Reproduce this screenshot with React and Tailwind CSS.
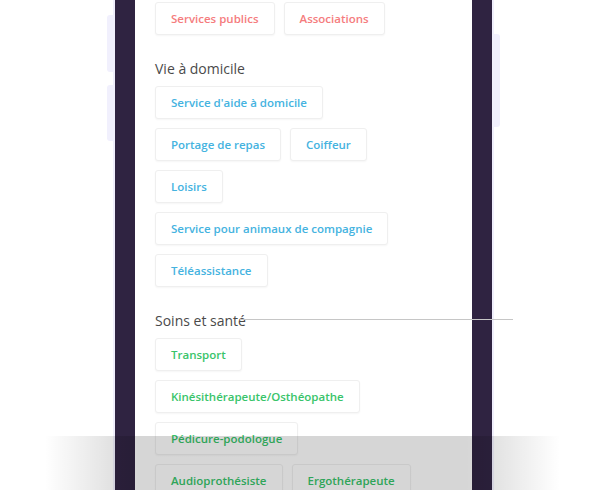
import React from 'react';

const sections = [
  {
    title: null,
    color: 'text-[#f57c7e]',
    rows: [['Services publics', 'Associations']],
  },
  {
    title: 'Vie à domicile',
    color: 'text-[#45b3df]',
    rows: [
      ["Service d'aide à domicile"],
      ['Portage de repas', 'Coiffeur'],
      ['Loisirs'],
      ['Service pour animaux de compagnie'],
      ['Téléassistance'],
    ],
  },
  {
    title: 'Soins et santé',
    color: 'text-[#38c46a]',
    rows: [
      ['Transport'],
      ['Kinésithérapeute/Osthéopathe'],
      ['Pédicure-podologue'],
      ['Audioprothésiste', 'Ergothérapeute'],
    ],
  },
];

function Chip({ label, color }) {
  return (
    <div className={`h-[33px] px-[15px] flex items-center border border-[#efefef] rounded-[3px] bg-white shadow-[0_1px_2px_rgba(0,0,0,0.04)] text-[11.5px] font-semibold whitespace-nowrap ${color}`}>
      {label}
    </div>
  );
}

export default function App() {
  return (
    <div className="relative w-[608px] h-[490px] overflow-hidden bg-white" style={{ fontFamily: '"Open Sans", "Noto Sans", sans-serif' }}>
      {/* side buttons of the phone */}
      <div className="absolute left-[107px] top-[15px] w-[8px] h-[57px] rounded-l-[3px] bg-[#f1f0fd]" />
      <div className="absolute left-[107px] top-[85px] w-[8px] h-[56px] rounded-l-[3px] bg-[#f1f0fd]" />
      <div className="absolute left-[492px] top-[34px] w-[8px] h-[93px] rounded-r-[3px] bg-[#f1f0fd]" />

      <div className="ml-[115px] w-[377px] h-[490px] border-x-[20px] border-[#2f2341] shadow-[0_0_0_2px_#f0effc] bg-white">
        <div className="pl-[20px] pt-[2px] flex flex-col gap-[24px]">
          {sections.map((s, i) => (
            <div key={i} className="flex flex-col">
              {s.title && (
                <div className="text-[14px] leading-[20px] text-[#4a4a4a] mb-[7px]">{s.title}</div>
              )}
              <div className="flex flex-col gap-[9px]">
                {s.rows.map((row, j) => (
                  <div key={j} className="flex gap-[9px]">
                    {row.map((l) => (
                      <Chip key={l} label={l} color={s.color} />
                    ))}
                  </div>
                ))}
              </div>
            </div>
          ))}
        </div>
      </div>

      {/* line across */}
      <div className="absolute left-[240px] top-[319px] w-[273px] h-px bg-[#c6c6c6]" />

      {/* bottom shade */}
      <div className="absolute left-[45px] top-[436px] w-[515px] h-[60px] bg-[linear-gradient(to_right,rgba(0,0,0,0)_0%,rgba(0,0,0,0.07)_8%,rgba(0,0,0,0.16)_18%,rgba(0,0,0,0.16)_82%,rgba(0,0,0,0.07)_92%,rgba(0,0,0,0)_100%)]" />
    </div>
  );
}
